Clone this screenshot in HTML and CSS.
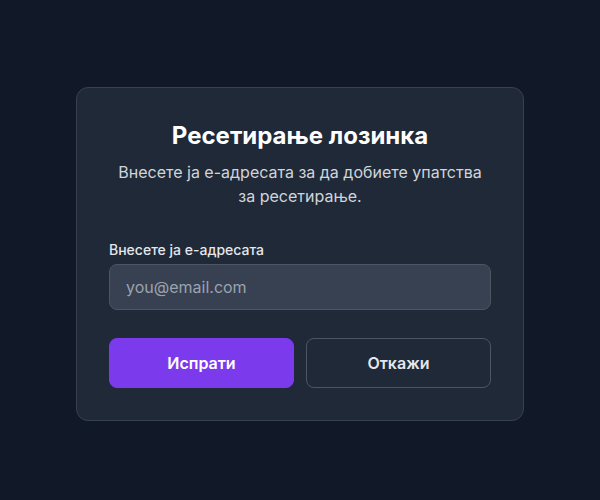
FILE: index.html
```html
<!DOCTYPE html>
<html lang="mk">
<head>
<meta charset="utf-8">
<title>Ресетирање лозинка</title>
<link rel="stylesheet" href="styles.css">
</head>
<body>
<main class="page">
  <form class="card" onsubmit="return false">
    <h1 class="title">Ресетирање лозинка</h1>
    <p class="subtitle">Внесете ја е-адресата за да добиете упатства за ресетирање.</p>
    <label class="label" for="email">Внесете ја е-адресата</label>
    <input class="input" id="email" type="email" placeholder="you@email.com">
    <div class="actions">
      <button class="btn btn-primary" type="submit">Испрати</button>
      <button class="btn btn-secondary" type="button">Откажи</button>
    </div>
  </form>
</main>
</body>
</html>
```
FILE: styles.css
```css
* { box-sizing: border-box; }
html, body { margin: 0; padding: 0; }
body {
  background: #111827;
  font-family: Inter, "Noto Sans", sans-serif;
  color: #f9fafb;
}
.page {
  min-height: 500px;
  padding-top: 8px;
  display: flex;
  align-items: center;
  justify-content: center;
}
.card {
  width: 448px;
  background: #1f2937;
  border: 1px solid #374151;
  border-radius: 12px;
  padding: 32px;
  display: flex;
  flex-direction: column;
}
.title {
  margin: 0;
  font-size: 24px;
  line-height: 32px;
  font-weight: 700;
  text-align: center;
  color: #ffffff;
}
.subtitle {
  margin: 8px 0 0;
  font-size: 16px;
  line-height: 24px;
  text-align: center;
  color: #d1d5db;
}
.label {
  margin-top: 32px;
  font-size: 14px;
  line-height: 20px;
  font-weight: 500;
  color: #e5e7eb;
}
.input {
  margin-top: 4px;
  height: 46px;
  padding: 0 16px;
  font-family: inherit;
  font-size: 16px;
  color: #f9fafb;
  background: #374151;
  border: 1px solid #4b5563;
  border-radius: 8px;
  outline: none;
}
.input::placeholder { color: #9ca3af; }
.actions {
  margin-top: 28px;
  display: flex;
  gap: 12px;
}
.btn {
  flex: 1;
  height: 50px;
  font-family: inherit;
  font-size: 16px;
  font-weight: 600;
  border-radius: 8px;
  cursor: pointer;
}
.btn-primary {
  background: #7c3aed;
  border: 1px solid #7c3aed;
  color: #ffffff;
}
.btn-secondary {
  background: transparent;
  border: 1px solid #4b5563;
  color: #e5e7eb;
}
```
